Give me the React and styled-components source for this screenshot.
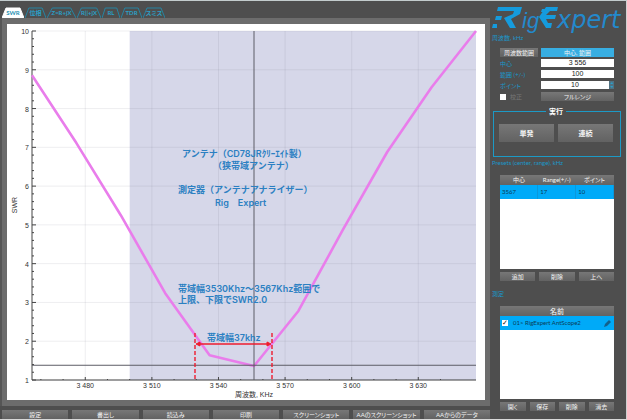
import React, { useState } from "react";
import styled, { createGlobalStyle } from "styled-components";

const UI_FONT = 'Lato, "Noto Sans CJK JP", sans-serif';
const CHART_FONT = '"Liberation Sans", "Noto Sans CJK JP", sans-serif';
const NOTE_FONT = 'Inter, "Noto Sans CJK JP", sans-serif';

const GlobalStyle = createGlobalStyle`
  * { box-sizing: border-box; }
  body { margin: 0; background: #4e4e4e; font-family: ${UI_FONT}; font-size: 6px; line-height: 8px; font-feature-settings: "palt"; }
  button, input { font: inherit; font-feature-settings: inherit; margin: 0; padding: 0; border: 0; border-radius: 0; }
`;

const Window = styled.div`
  display: grid;
  grid-template-columns: minmax(0, 1fr) 137px;
  min-height: 100vh;
  background: #4e4e4e;
  border-top: 1px solid #c3cccd;
  border-bottom: 1px solid #d8d8d8;
`;

const Main = styled.main`
  display: flex;
  flex-direction: column;
  padding-top: 6px;
`;

const TabBar = styled.div`
  display: flex;
  gap: 1px;
  padding-left: 2px;
`;

const TabButton = styled.button`
  position: relative;
  width: ${(p) => p.$width}px;
  height: 11px;
  background: none;
  color: ${(p) => (p.$active ? "#2a94b4" : "#2aa0c8")};
  font-weight: 700;
  white-space: nowrap;
  cursor: pointer;
`;

const TabShape = styled.svg`
  position: absolute;
  inset: 0;
  width: 100%;
  height: 100%;
`;

const TabText = styled.span`
  position: relative;
`;

const ChartFrame = styled.section`
  flex: 1;
  padding: 6px 5px 6px 5px;
  background: #6c6c6c;
  border-left: 2px solid #555;
`;

const ChartSvg = styled.svg`
  display: block;
  width: 100%;
  background: #fff;
`;

const ChartNotes = styled.g`
  font-family: ${NOTE_FONT};
  font-size: 9px;
  font-weight: 600;
  font-feature-settings: normal;
  fill: #2b80c2;
`;

const Footer = styled.footer`
  display: grid;
  grid-template-columns: repeat(7, minmax(0, 1fr));
  gap: 4px;
  padding: 4px 0 0 2px;
`;

const Button = styled.button`
  height: ${(p) => (p.$large ? 18 : 9)}px;
  line-height: 8px;
  font-size: ${(p) => (p.$large ? 7 : 6)}px;
  font-weight: ${(p) => (p.$large ? 700 : 400)};
  color: #f4f4f4;
  background: ${(p) => (p.$active ? "#38aee2" : "linear-gradient(#777, #626262)")};
  white-space: nowrap;
  cursor: pointer;
`;

const Sidebar = styled.aside`
  display: flex;
  flex-direction: column;
  padding: 5px 5px 6px 2px;
  border-right: 1px solid #d0d0d0;
`;

const Logo = styled.svg`
  display: block;
  width: 130px;
  height: 28px;
`;

const SectionTitle = styled.h2`
  margin: 0;
  color: #1a98ca;
  font-size: 6px;
  font-weight: 400;
  line-height: 8px;
`;

const Settings = styled.div`
  display: grid;
  grid-template-columns: 38px 1fr;
  grid-auto-rows: 9px;
  gap: 2px 3px;
  padding: 6px 7px 0 8px;
`;

const FieldLabel = styled.label`
  display: flex;
  align-items: center;
  gap: 4px;
  color: ${(p) => (p.$muted ? "#777" : "#1a98ca")};
`;

const Field = styled.input`
  min-width: 0;
  width: 100%;
  height: 8px;
  font-family: ${CHART_FONT};
  font-size: 7px;
  text-align: center;
  color: #222;
  background: #fff;
`;

const PointField = styled.div`
  display: grid;
  grid-template-columns: 1fr 5px;
`;

const StepButton = styled.button`
  display: grid;
  place-items: center;
  height: 8px;
  background: #4f7182;
`;

const Check = styled.input`
  appearance: none;
  display: grid;
  place-items: center;
  width: 6px;
  height: 6px;
  background: #fff;
  &:checked::before {
    content: "✓";
    font: 700 7px/6px "DejaVu Sans", sans-serif;
    color: #111;
  }
`;

const RunGroup = styled.fieldset`
  display: grid;
  grid-template-columns: 1fr 1fr;
  gap: 4px;
  min-width: 0;
  margin: 6px 0 2px 1px;
  padding: 9px 7px 14px 5px;
  border: 1px solid #1c9ac6;
`;

const RunTitle = styled.legend`
  margin: 0 auto;
  padding: 0 3px;
  color: #fff;
  font-size: 7px;
  font-weight: 700;
`;

const ListBox = styled.div`
  height: ${(p) => p.$height}px;
  margin: 8px 7px 3px 8px;
  background: #fff;
`;

const Table = styled.table`
  width: 100%;
  border-collapse: collapse;
  table-layout: fixed;
`;

const HeadCell = styled.th`
  height: 10px;
  padding: 0;
  font-size: 6px;
  font-weight: 400;
  color: #f4f4f4;
  background: linear-gradient(#777, #636363);
`;

const Cell = styled.td`
  height: 14px;
  padding: 0 2px;
  color: #0b3c55;
  background: #00aaf8;
  border-right: 1px solid #0a98dc;
`;

const ButtonRow = styled.div`
  display: grid;
  grid-template-columns: repeat(${(p) => p.$count}, 1fr);
  gap: 4px;
  padding: 0 7px 0 8px;
  margin-bottom: ${(p) => p.$below || 0}px;
`;

const MeasureRow = styled.div`
  display: flex;
  align-items: center;
  gap: 5px;
  height: 14px;
  padding: 0 2px;
  background: #00aaf8;
`;

const MeasureHead = styled.div`
  height: 10px;
  text-align: center;
  font-size: 7px;
  line-height: 10px;
  color: #fff;
  background: linear-gradient(#777, #636363);
`;

const MeasureName = styled.label`
  flex: 1;
  color: #0b3c55;
`;

const IconButton = styled.button`
  display: grid;
  width: 9px;
  height: 9px;
  background: none;
`;

const TABS = [
  ["SWR", 22], ["位相", 21], ["Z=R+jX", 29], ["R||+jX", 24], ["RL", 18], ["TDR", 21], ["スミス", 22],
];

const FOOTER = ["設定", "書出し", "読込み", "印刷", "スクリーンショット", "AAのスクリーンショット", "AAからのデータ"];

const SWR = [8.86, 7.11, 5.25, 3.24, 1.64, 1.36, 2.78, 4.87, 6.88, 8.55, 10];
const LEFT = 25, RIGHT = 469, TOP = 7, BOTTOM = 356;
const fx = (khz) => LEFT + (khz - 3456) * 2.22;
const fy = (swr) => BOTTOM - ((swr - 1) * (BOTTOM - TOP)) / 9;

function Chart() {
  const line = SWR.map((v, i) => `${fx(3456 + i * 20)},${fy(v)}`).join(" ");
  const xLabels = [3480, 3510, 3540, 3570, 3600, 3630];
  const yLabels = [1, 2, 3, 4, 5, 6, 7, 8, 9, 10];
  const xMinor = Array.from({ length: 19 }, (_, i) => 3460 + i * 10);
  const yMinor = Array.from({ length: 46 }, (_, i) => 1 + i / 5);
  return (
    <ChartSvg viewBox="0 0 478 376" role="img" aria-label="SWR">
      <rect x={fx(3500)} y={TOP} width={RIGHT - fx(3500)} height={BOTTOM - TOP} fill="#d6d7e9" />
      <g stroke="#707080" strokeOpacity="0.12">
        {xLabels.map((v) => <line key={v} x1={fx(v)} x2={fx(v)} y1={TOP} y2={BOTTOM} />)}
        {yLabels.map((v) => <line key={v} x1={LEFT} x2={RIGHT} y1={fy(v)} y2={fy(v)} />)}
      </g>
      <g stroke="#444" strokeWidth="1">
        <path d={`M${LEFT} ${TOP}V${BOTTOM}H${RIGHT}`} fill="none" />
        {yMinor.map((v, i) => <line key={v} x1={LEFT} x2={LEFT + (i % 5 ? 2 : 4)} y1={fy(v)} y2={fy(v)} />)}
        {xMinor.map((v) => <line key={v} x1={fx(v)} x2={fx(v)} y1={BOTTOM} y2={BOTTOM - (xLabels.includes(v) ? 3 : 1)} />)}
      </g>
      <polyline points={line} fill="none" stroke="#e97deb" strokeWidth="2.6" strokeLinejoin="round" />
      <g stroke="#5c5c66" strokeWidth="1">
        <line x1={fx(3556)} x2={fx(3556)} y1={TOP} y2={BOTTOM} />
        <line x1={LEFT} x2={RIGHT} y1={fy(1.38)} y2={fy(1.38)} />
      </g>
      <g fontFamily={CHART_FONT} fontSize="7" fill="#333">
        {yLabels.map((v) => <text key={v} x="22" y={fy(v) + 3} textAnchor="end">{v}</text>)}
        {xLabels.map((v) => (
          <text key={v} x={fx(v)} y="364" textAnchor="middle">{`3 ${v - 3000}`}</text>
        ))}
        <text x="247" y="373" textAnchor="middle">周波数, KHz</text>
        <text transform="translate(10 181) rotate(-90)" textAnchor="middle">SWR</text>
      </g>
      <ChartNotes>
        <text x="175" y="133">アンテナ（CD78JRｸﾘｰｴｲﾄ製）</text>
        <text x="206" y="145">（狭帯域アンテナ）</text>
        <text x="171" y="169">測定器（アンテナアナライザー）</text>
        <text x="208" y="182">Rig　Expert</text>
        <text x="171" y="268">帯域幅3530Khz～3567Khz範囲で</text>
        <text x="171" y="279">上限、下限でSWR2.0</text>
        <text x="200" y="317">帯域幅37khz</text>
      </ChartNotes>
      <g stroke="#ee1c2e" strokeWidth="1.4" fill="#ee1c2e">
        <path d="M188 309V356M265 309V356" strokeDasharray="4 2" />
        <path d="M191 320H262" />
        <path d="M189 320l4-2v4zM264 320l-4-2v4z" strokeWidth="1" />
      </g>
    </ChartSvg>
  );
}

function RigExpertLogo() {
  return (
    <Logo viewBox="0 0 130 28" role="img" aria-label="RigExpert">
      <g fill="#159bdd">
        <path d="M6 1H30L28 8L19 13L24 22H18L12 12L21 8L22 5H5z" />
        <path d="M4 10h6l-1 4H3zM1 18h4v4H0z" />
        <path d="M54 1H66L65 5H58L54 9H64L63 13H54L56 17H60L59 22H54L47 11z" />
        <path d="M50 3h3l-1 3h-3z" />
      </g>
      <g fill="#2389cc" fontStyle="italic">
        <text x="30" y="22" fontFamily="Liberation Sans, sans-serif" fontSize="22">ig</text>
        <text x="65" y="22" fontFamily="DejaVu Sans, sans-serif" fontSize="24">xpert</text>
      </g>
    </Logo>
  );
}

export default function App() {
  const [tab, setTab] = useState("SWR");
  return (
    <>
      <GlobalStyle />
      <Window>
        <Main>
          <TabBar role="tablist">
            {TABS.map(([name, width]) => (
              <TabButton key={name} role="tab" aria-selected={tab === name} $active={tab === name} $width={width} onClick={() => setTab(name)}>
                <TabShape viewBox="0 0 22 11" preserveAspectRatio="none" aria-hidden="true">
                  <path d="M0 11L4 1H18L22 11" fill={tab === name ? "#fff" : "none"} stroke={tab === name ? "#fff" : "#2784a2"} strokeWidth="1" vectorEffect="non-scaling-stroke" />
                </TabShape>
                <TabText>{name}</TabText>
              </TabButton>
            ))}
          </TabBar>
          <ChartFrame><Chart /></ChartFrame>
          <Footer>
            {FOOTER.map((name) => <Button key={name}>{name}</Button>)}
          </Footer>
        </Main>
        <Sidebar>
          <RigExpertLogo />
          <SectionTitle>周波数, kHz</SectionTitle>
          <Settings>
            <Button>周波数範囲</Button>
            <Button $active>中心, 範囲</Button>
            <FieldLabel htmlFor="center">中心</FieldLabel>
            <Field id="center" defaultValue="3 556" />
            <FieldLabel htmlFor="range">範囲 (+/-)</FieldLabel>
            <Field id="range" defaultValue="100" />
            <FieldLabel htmlFor="points">ポイント</FieldLabel>
            <PointField>
              <Field id="points" defaultValue="10" />
              <StepButton aria-label="ポイント">
                <svg width="3" height="6" viewBox="0 0 3 6" aria-hidden="true"><path d="M0 2L2 0L3 2zM0 4h3L2 6z" fill="#2b9fca" /></svg>
              </StepButton>
            </PointField>
            <FieldLabel $muted><Check type="checkbox" />校正</FieldLabel>
            <Button>フルレンジ</Button>
          </Settings>
          <RunGroup>
            <RunTitle>実行</RunTitle>
            <Button $large>単発</Button>
            <Button $large>連続</Button>
          </RunGroup>
          <SectionTitle>Presets (center, range), kHz</SectionTitle>
          <ListBox $height={94}>
            <Table>
              <thead><tr><HeadCell>中心</HeadCell><HeadCell>Range(+/-)</HeadCell><HeadCell>ポイント</HeadCell></tr></thead>
              <tbody><tr><Cell>3567</Cell><Cell>17</Cell><Cell>10</Cell></tr></tbody>
            </Table>
          </ListBox>
          <ButtonRow $count={3} $below={9}>
            <Button>追加</Button><Button>削除</Button><Button>上へ</Button>
          </ButtonRow>
          <SectionTitle>測定</SectionTitle>
          <ListBox $height={93}>
            <MeasureHead>名前</MeasureHead>
            <MeasureRow>
              <Check id="m1" type="checkbox" defaultChecked />
              <MeasureName htmlFor="m1">01&gt; RigExpert AntScope2</MeasureName>
              <IconButton aria-label="編集">
                <svg viewBox="0 0 9 9" aria-hidden="true"><path d="M1 8l1-3 4-4 2 2-4 4z" fill="#12618c" /></svg>
              </IconButton>
            </MeasureRow>
          </ListBox>
          <ButtonRow $count={4}>
            <Button>開く</Button><Button>保存</Button><Button>削除</Button><Button>消去</Button>
          </ButtonRow>
        </Sidebar>
      </Window>
    </>
  );
}
